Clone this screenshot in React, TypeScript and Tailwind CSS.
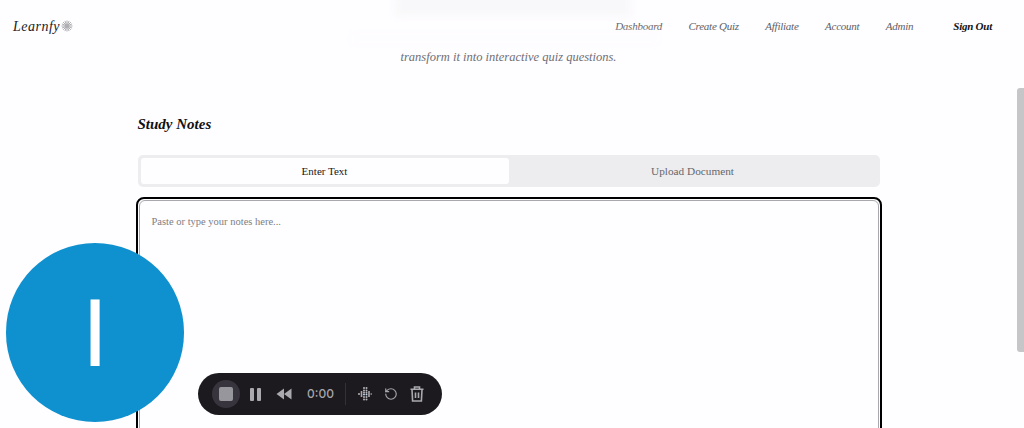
import { RotateCcw } from 'lucide-react';

const navLinks = ['Dashboard', 'Create Quiz', 'Affiliate', 'Account', 'Admin'];

function Header() {
  return (
    <header className="flex h-[52px] items-center justify-between pl-[13px] pr-[25px] italic">
      <div className="flex items-center gap-[1px]">
        <span className="text-[14px] tracking-[0.5px] text-[#222226]">Learnfy</span>
        <svg width="12" height="12" viewBox="0 0 12 12" stroke="#aeadb1" strokeWidth="1">
          <path d="M6 0.5V11.5M0.5 6H11.5M2.1 2.1L9.9 9.9M9.9 2.1L2.1 9.9M3.9 0.9L8.1 11.1M8.1 0.9L3.9 11.1M0.9 3.9L11.1 8.1M0.9 8.1L11.1 3.9" />
        </svg>
      </div>
      <nav className="mt-[1px] flex items-center text-[11px] tracking-[-0.25px] text-[#5f5f66]">
        <div className="flex items-center gap-[26.5px]">
          {navLinks.map((link) => (
            <a key={link}>{link}</a>
          ))}
        </div>
        <a className="ml-[40px] font-bold text-[#111113]">Sign Out</a>
      </nav>
    </header>
  );
}

function Recorder() {
  return (
    <div className="absolute left-[198px] top-[373px] flex h-[42px] w-[244px] items-center rounded-full bg-[#1c1a1f] pl-[14px]">
      <div className="flex h-[28px] w-[28px] items-center justify-center rounded-full bg-[#37343d]">
        <div className="h-[14px] w-[14px] rounded-[2px] bg-[#96969c]" />
      </div>
      <div className="ml-[10px] flex gap-[3px]">
        <div className="h-[13px] w-[4px] rounded-[1px] bg-[#a9a9ae]" />
        <div className="h-[13px] w-[4px] rounded-[1px] bg-[#a9a9ae]" />
      </div>
      <svg className="ml-[15px]" width="16" height="12" viewBox="0 0 16 12" fill="#a9a9ae">
        <path d="M8 0.5V11.5L0.5 6ZM15.5 0.5V11.5L8 6Z" />
      </svg>
      <span className="ml-[15px] w-[26px] font-['Inter',sans-serif] text-[12px] font-medium text-[#a5a5aa]">0:00</span>
      <div className="ml-[12px] h-[22px] w-px bg-[#333137]" />
      <svg className="ml-[12px]" width="14" height="14" viewBox="0 0 14 14" fill="#b4b4b9">
        <circle cx="1" cy="7" r="1" />
        <circle cx="3.5" cy="5" r="1" />
        <circle cx="3.5" cy="7" r="1" />
        <circle cx="3.5" cy="9" r="1" />
        <circle cx="6" cy="1" r="1" />
        <circle cx="6" cy="3.5" r="1" />
        <circle cx="6" cy="5.5" r="1" />
        <circle cx="6" cy="7.5" r="1" fill="#c4d8e6" />
        <circle cx="6" cy="10" r="1" />
        <circle cx="6" cy="12.5" r="1" />
        <circle cx="8.5" cy="1" r="1" />
        <circle cx="8.5" cy="3.5" r="1" />
        <circle cx="8.5" cy="5.5" r="1" />
        <circle cx="8.5" cy="7.5" r="1" fill="#c4d8e6" />
        <circle cx="8.5" cy="10" r="1" />
        <circle cx="8.5" cy="12.5" r="1" />
        <circle cx="11" cy="5" r="1" />
        <circle cx="11" cy="7" r="1" />
        <circle cx="11" cy="9" r="1" />
        <circle cx="13.2" cy="7" r="0.8" />
      </svg>
      <RotateCcw className="ml-[12px] text-[#a5a5aa]" size={14} strokeWidth={2} />
      <svg className="ml-[12px]" width="14" height="16" viewBox="0 0 14 16" fill="none" stroke="#a9a9ae" strokeWidth="1.6">
        <path d="M0.5 3.2H13.5M4.5 3V1H9.5V3M2 3.5L2.6 15H11.4L12 3.5" />
        <path d="M5.5 6.5V12M8.5 6.5V12" />
      </svg>
    </div>
  );
}

export default function App() {
  return (
    <div className="relative h-[428px] w-[1024px] overflow-hidden bg-[#fefdff] font-['Liberation_Serif',serif]">
      <div className="pr-[7px]">
        <Header />
        <p className="text-center text-[12.5px] italic leading-[10px] text-[#6f6f75]">
          transform it into interactive quiz questions.
        </p>
        <main className="mx-auto mt-[52px] w-[742px]">
          <h2 className="text-[15px] font-bold italic leading-[20px] text-[#111113]">Study Notes</h2>
          <div className="mt-[21px] flex h-[32px] rounded-[5px] bg-[#ededef] p-[3px]">
            <div className="flex flex-1 items-center justify-center rounded-[3px] bg-[#fefdff] text-[11px] text-[#18181b]">
              Enter Text
            </div>
            <div className="flex flex-1 items-center justify-center text-[11.25px] text-[#66666c]">Upload Document</div>
          </div>
          <div className="mx-[-2px] mt-[10px] h-[300px] rounded-[8px] border-2 border-black p-[1px]">
            <div className="h-full rounded-[6px] border border-[#a9a9ad] px-[12px] py-[13px] text-[10.5px] text-[#7d7d83]">
              Paste or type your notes here...
            </div>
          </div>
        </main>
      </div>

      {/* blurred heading still fading out under the nav */}
      <div className="absolute left-[395px] top-[-6px] h-[22px] w-[236px] bg-[#f8f7f9] blur-[4px]" />
      <div className="absolute left-[350px] top-[32px] h-[13px] w-[310px] bg-[#fdfcfe] blur-[3px]" />

      <div className="absolute right-0 top-[88px] h-[264px] w-[7px] rounded-l-[3px] bg-[#c6c6c8]" />

      <div className="absolute left-[6px] top-[243px] flex h-[179px] w-[178px] items-center justify-center rounded-full bg-[#0f90cf] font-['Liberation_Sans',sans-serif] text-[96px] leading-none text-white">
        I
      </div>

      <Recorder />
    </div>
  );
}
